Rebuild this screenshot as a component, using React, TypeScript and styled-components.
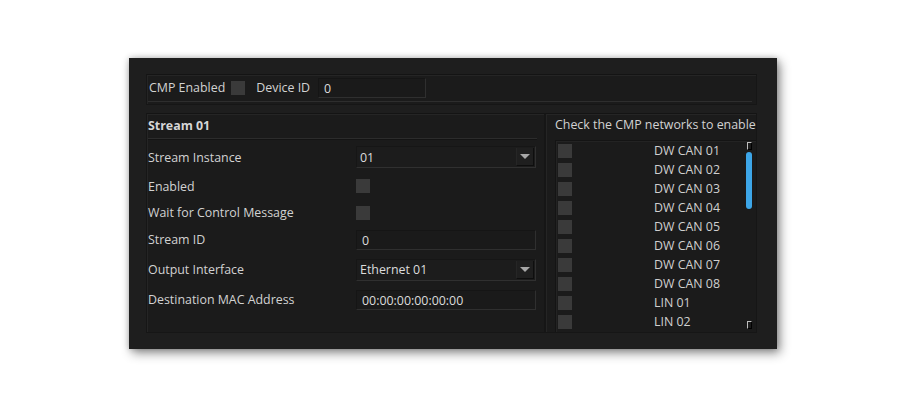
import React from "react";
import styled, { createGlobalStyle } from "styled-components";

const Global = createGlobalStyle`
  html, body { margin: 0; padding: 0; background: #ffffff; }
  body { font-family: "Open Sans", "Noto Sans", sans-serif; font-size: 12.4px; color: #d4d4d4; }
`;

const Page = styled.div`
  width: 906px;
  height: 407px;
  padding: 58px 0 0 129px;
  box-sizing: border-box;
`;

const Window = styled.div`
  width: 648px;
  height: 291px;
  box-sizing: border-box;
  background: #1e1e1e;
  box-shadow: 3px 4px 10px rgba(0, 0, 0, 0.45), 0 0 6px rgba(0, 0, 0, 0.2);
  padding: 16px 20px 16px 17px;
  display: flex;
  flex-direction: column;
  gap: 8px;
`;

const Group = styled.div`
  background: #1b1b1b;
  border: 1px solid #161616;
  border-top-color: #141414;
  box-shadow: inset 1px 1px 0 #252525;
  box-sizing: border-box;
`;

const TopGroup = styled(Group)`
  height: 31px;
  display: flex;
  align-items: center;
  padding: 0 0 4px 1px;
  position: relative;
  &::after {
    content: "";
    position: absolute;
    left: 1px;
    right: 4px;
    bottom: 2px;
    height: 1px;
    background: #2e2e2e;
  }
`;

const Label = styled.span<{ $ml?: number }>`
  color: #d2d2d2;
  white-space: nowrap;
  margin-left: ${(p) => p.$ml ?? 0}px;
`;

const Check = styled.span<{ $ml?: number }>`
  display: inline-block;
  width: 14px;
  height: 14px;
  background: #3a3a3a;
  margin-left: ${(p) => p.$ml ?? 0}px;
  flex: none;
`;

const TextInput = styled.div<{ $w?: number; $ml?: number }>`
  width: ${(p) => (p.$w ? `${p.$w}px` : "100%")};
  margin-left: ${(p) => p.$ml ?? 0}px;
  height: 20px;
  box-sizing: border-box;
  background: #1a1a1a;
  border: 1px solid #2f2f2f;
  border-top-color: #151515;
  border-left-color: #151515;
  padding: 2px 0 0 5px;
  color: #dcdcdc;
  line-height: 16px;
  flex: none;
`;

const Combo = styled.div`
  width: 180px;
  height: 22px;
  box-sizing: border-box;
  background: #1c1c1c;
  border: 1px solid #303030;
  border-top-color: #161616;
  border-left-color: #161616;
  display: flex;
  align-items: center;
  padding-left: 3px;
  color: #dcdcdc;
`;

const ComboText = styled.span`
  flex: 1;
`;

const ComboButton = styled.span`
  width: 18px;
  height: 18px;
  margin-right: 1px;
  box-sizing: border-box;
  background: #1f1f1f;
  border-right: 1px solid #0e0e0e;
  border-bottom: 1px solid #0e0e0e;
  border-left: 1px solid #262626;
  display: flex;
  align-items: center;
  justify-content: center;
`;

const Arrow = styled.span`
  width: 0;
  height: 0;
  border-left: 5px solid transparent;
  border-right: 5px solid transparent;
  border-top: 5px solid #a8a8a8;
`;

const Lower = styled.div`
  display: flex;
  height: 220px;
`;

const StreamPanel = styled(Group)`
  width: 399px;
  padding: 3px 7px 0 1px;
  display: flex;
  flex-direction: column;
`;

const Title = styled.div`
  font-weight: 700;
  color: #d6d6d6;
  height: 21px;
  line-height: 18px;
  border-bottom: 1px solid #2c2c2c;
  box-shadow: 0 1px 0 #141414;
`;

const Rows = styled.div`
  display: flex;
  flex-direction: column;
  margin-top: 6px;
`;

const Row = styled.div<{ $h: number }>`
  display: flex;
  align-items: center;
  height: ${(p) => p.$h}px;
`;

const RowLabel = styled(Label)`
  width: 208px;
  flex: none;
`;

const NetPanel = styled(Group)`
  width: 212px;
  padding: 2px 0 0 9px;
  display: flex;
  flex-direction: column;
`;

const NetTitle = styled.div`
  color: #d2d2d2;
  height: 21px;
  line-height: 17px;
  white-space: nowrap;
`;

const ListBox = styled.div`
  flex: 1;
  margin: 3px 0 0 0;
  border: 1px solid #141414;
  border-right: none;
  border-bottom: none;
  box-shadow: inset 1px 1px 0 #232323;
  display: flex;
`;

const Items = styled.div`
  flex: 1;
  padding: 0 0 0 2px;
  display: flex;
  flex-direction: column;
`;

const Item = styled.div`
  height: 19px;
  display: flex;
  align-items: center;
`;

const ItemLabel = styled.span`
  margin-left: 82px;
  color: #d0d0d0;
`;

const ScrollTrack = styled.div`
  width: 10px;
  display: flex;
  flex-direction: column;
  align-items: center;
  padding-top: 1px;
  margin-right: 2px;
`;

const ScrollCap = styled.span<{ $bottom?: boolean }>`
  width: 3px;
  height: 6px;
  border: 1px solid #bdbdbd;
  border-right-color: #000;
  border-bottom-color: #000;
  margin-top: ${(p) => (p.$bottom ? "auto" : "0")};
  margin-bottom: ${(p) => (p.$bottom ? "3px" : "0")};
`;

const Thumb = styled.span`
  width: 6px;
  height: 57px;
  border-radius: 3px;
  background: #3da6e8;
  margin-top: 2px;
`;

const rows = [
  { label: "Stream Instance", kind: "combo", value: "01", h: 24 },
  { label: "Enabled", kind: "check", h: 34 },
  { label: "Wait for Control Message", kind: "check", h: 19 },
  { label: "Stream ID", kind: "text", value: "0", h: 35 },
  { label: "Output Interface", kind: "combo", value: "Ethernet 01", h: 25 },
  { label: "Destination MAC Address", kind: "text", value: "00:00:00:00:00:00", h: 35 },
];

const nets = [
  "DW CAN 01",
  "DW CAN 02",
  "DW CAN 03",
  "DW CAN 04",
  "DW CAN 05",
  "DW CAN 06",
  "DW CAN 07",
  "DW CAN 08",
  "LIN 01",
  "LIN 02",
];

export default function App() {
  return (
    <Page>
      <Global />
      <Window>
        <TopGroup>
          <Label $ml={1}>CMP Enabled</Label>
          <Check $ml={6} />
          <Label $ml={11}>Device ID</Label>
          <TextInput $w={108} $ml={8}>0</TextInput>
        </TopGroup>
        <Lower>
          <StreamPanel>
            <Title>Stream 01</Title>
            <Rows>
              {rows.map((r) => (
                <Row key={r.label} $h={r.h}>
                  <RowLabel>{r.label}</RowLabel>
                  {r.kind === "combo" && (
                    <Combo>
                      <ComboText>{r.value}</ComboText>
                      <ComboButton>
                        <Arrow />
                      </ComboButton>
                    </Combo>
                  )}
                  {r.kind === "check" && <Check />}
                  {r.kind === "text" && <TextInput $w={180}>{r.value}</TextInput>}
                </Row>
              ))}
            </Rows>
          </StreamPanel>
          <NetPanel>
            <NetTitle>Check the CMP networks to enable</NetTitle>
            <ListBox>
              <Items>
                {nets.map((n) => (
                  <Item key={n}>
                    <Check />
                    <ItemLabel>{n}</ItemLabel>
                  </Item>
                ))}
              </Items>
              <ScrollTrack>
                <ScrollCap />
                <Thumb />
                <ScrollCap $bottom />
              </ScrollTrack>
            </ListBox>
          </NetPanel>
        </Lower>
      </Window>
    </Page>
  );
}
